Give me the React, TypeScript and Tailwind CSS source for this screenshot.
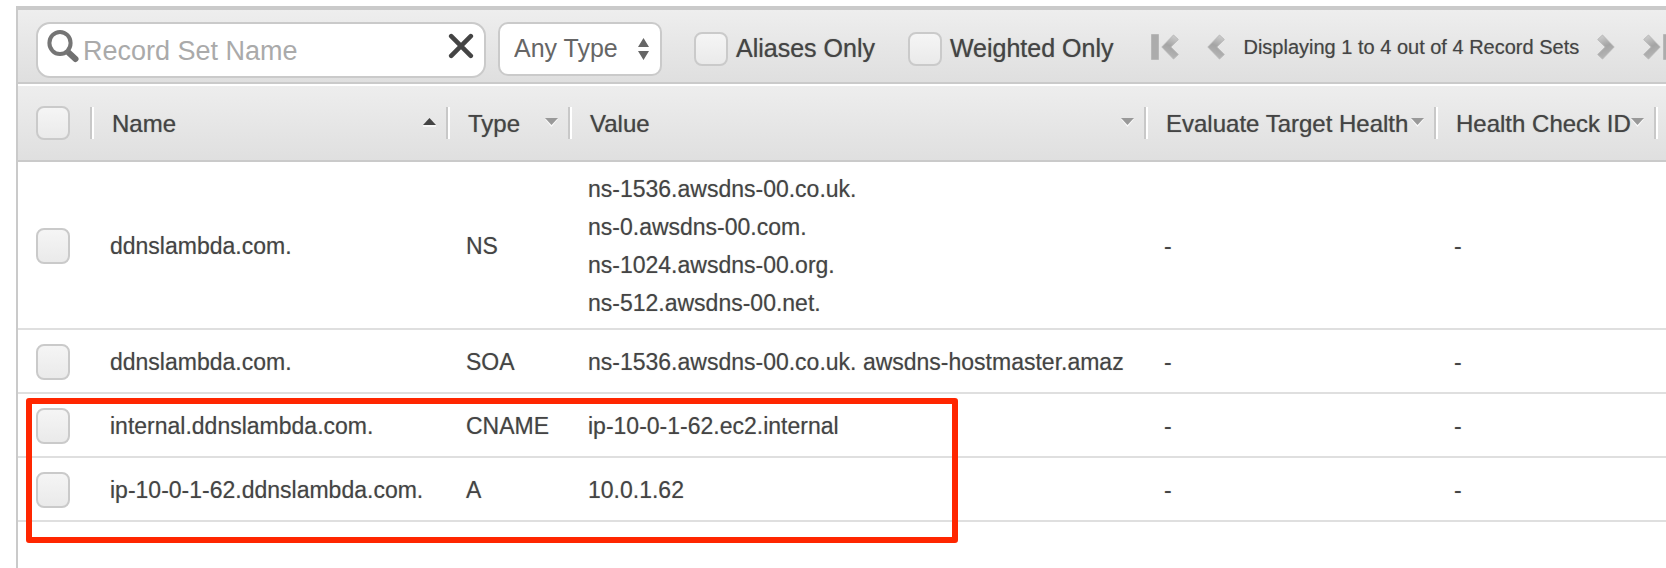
import React from "react";

type RecordSet = {
  name: string;
  type: string;
  values: string[];
};

const records: RecordSet[] = [
  {
    name: "ddnslambda.com.",
    type: "NS",
    values: [
      "ns-1536.awsdns-00.co.uk.",
      "ns-0.awsdns-00.com.",
      "ns-1024.awsdns-00.org.",
      "ns-512.awsdns-00.net.",
    ],
  },
  {
    name: "ddnslambda.com.",
    type: "SOA",
    values: ["ns-1536.awsdns-00.co.uk. awsdns-hostmaster.amaz"],
  },
  { name: "internal.ddnslambda.com.", type: "CNAME", values: ["ip-10-0-1-62.ec2.internal"] },
  { name: "ip-10-0-1-62.ddnslambda.com.", type: "A", values: ["10.0.1.62"] },
];

const checkboxBase =
  "block w-[34px] shrink-0 appearance-none rounded-lg border-2 border-[#cacaca] bg-linear-to-b from-[#f5f5f5] to-[#eaeaea] checked:bg-[#bbb] checked:bg-none";

function SearchIcon() {
  return (
    <svg className="h-[34px] w-[34px] shrink-0" viewBox="0 0 34 34" fill="none" aria-hidden="true">
      <path d="M22.5 23.5 29.5 30" stroke="#707070" strokeWidth="6" strokeLinecap="round" />
      <ellipse cx="14" cy="14" rx="10.6" ry="11" stroke="#757575" strokeWidth="4" />
    </svg>
  );
}

function ClearIcon() {
  return (
    <svg className="h-[26px] w-[26px]" viewBox="0 0 26 26" fill="none" aria-hidden="true">
      <path d="M3.2 3.2 22.8 22.8M22.8 3.2 3.2 22.8" stroke="#444" strokeWidth="4.6" strokeLinecap="round" />
    </svg>
  );
}

function Chevron({ flip = false }: { flip?: boolean }) {
  const id = flip ? "chevron-right" : "chevron-left";
  return (
    <svg
      className={flip ? "h-[26px] w-[18px] -scale-x-100" : "h-[26px] w-[18px]"}
      viewBox="0 0 18 26"
      aria-hidden="true"
    >
      <defs>
        <linearGradient id={id} x1="0.8" y1="0" x2="0.5" y2="1">
          <stop offset="0" stopColor="#d0d0d0" />
          <stop offset="0.5" stopColor="#a4a4a4" />
          <stop offset="1" stopColor="#b8b8b8" />
        </linearGradient>
      </defs>
      <path d="M12.5 1 17.3 5.5 9.8 13 17.3 20.5 12.5 25 .8 13Z" fill={`url(#${id})`} stroke="#b8b8b8" strokeWidth="1" />
    </svg>
  );
}

function Bar() {
  return (
    <svg className="h-[26px] w-2" viewBox="0 0 8 26" aria-hidden="true">
      <path d="M.5 .5H7.5V25.5H.5Z" fill="#acacac" stroke="#b8b8b8" />
    </svg>
  );
}

function SortIcon({ up = false }: { up?: boolean }) {
  return (
    <svg className="mb-1 h-[10px] w-[13px] shrink-0" viewBox="0 0 13 10" aria-hidden="true">
      {up ? (
        <>
          <path d="M0 8H13V10H0Z" fill="#f6f6f6" />
          <path d="M6.5 1 13 8H0Z" fill="#444" />
        </>
      ) : (
        <>
          <path d="M0 2H13L6.5 10Z" fill="#fafafa" />
          <path d="M0 1H13L6.5 8Z" fill="#999" />
        </>
      )}
    </svg>
  );
}

function HeaderCell({ label, sort }: { label: string; sort?: "up" | "down" }) {
  return (
    <th scope="col" className="h-[78px] border-y-2 border-t-white border-b-[#cacaca] p-0 font-normal">
      <div className="flex h-8 items-center border-l-2 border-[#c8c8c8] shadow-[inset_2px_0_0_#fff]">
        <button
          type="button"
          className="flex w-full items-center justify-between pt-[2px] pr-[10px] pl-5 whitespace-nowrap text-shadow-[0_0_1px_#4449]"
        >
          <span>{label}</span>
          {sort && <SortIcon up={sort === "up"} />}
        </button>
      </div>
    </th>
  );
}

function Toolbar() {
  return (
    <div className="flex h-[74px] items-start overflow-hidden border-b-2 border-[#cacaca] bg-linear-to-b from-[#eee] to-[#dfdfdf] pt-3 pl-[18px] text-[25px] whitespace-nowrap">
      <div className="flex h-14 w-[450px] shrink-0 items-center rounded-[14px] border-2 border-[#cacaca] bg-white pr-[10px] pl-2">
        <div className="-mt-2">
          <SearchIcon />
        </div>
        <input
          type="text"
          aria-label="Record Set Name"
          placeholder="Record Set Name"
          className="ml-[3px] min-w-0 flex-1 pt-[2px] text-[27px] outline-none placeholder:text-[#aaa]"
        />
        <button type="button" aria-label="Clear" className="-mt-2">
          <ClearIcon />
        </button>
      </div>

      <div className="relative ml-3 flex h-[54px] w-[164px] shrink-0 items-center rounded-[10px] border-2 border-[#cacaca] bg-white text-[#666]">
        <select aria-label="Record type" className="h-full w-full appearance-none bg-transparent pl-[14px] outline-none">
          <option>Any Type</option>
        </select>
        <svg className="pointer-events-none absolute right-[11px] h-[22px] w-[11px]" viewBox="0 0 11 22" aria-hidden="true">
          <path d="M5.5 0 11 9H0ZM5.5 22 0 13H11Z" fill="#666" />
        </svg>
      </div>

      <div className="ml-8 flex h-[54px] shrink-0 items-center gap-2">
        <input id="aliases" type="checkbox" className={`${checkboxBase} h-[34px]`} />
        <label htmlFor="aliases" className="text-shadow-[0_0_1px_#4449]">Aliases Only</label>
      </div>
      <div className="ml-[33px] flex h-[54px] shrink-0 items-center gap-2">
        <input id="weighted" type="checkbox" className={`${checkboxBase} h-[34px]`} />
        <label htmlFor="weighted" className="text-shadow-[0_0_1px_#4449]">Weighted Only</label>
      </div>

      <nav aria-label="Pages" className="ml-[38px] flex h-[50px] shrink-0 items-center">
        <button type="button" aria-label="First page" className="flex gap-[2px]">
          <Bar />
          <Chevron />
        </button>
        <button type="button" aria-label="Previous page" className="ml-7">
          <Chevron />
        </button>
        <span className="mx-[18px] text-[20px] text-shadow-[0_0_1px_#4446]">Displaying 1 to 4 out of 4 Record Sets</span>
        <button type="button" aria-label="Next page">
          <Chevron flip />
        </button>
        <button type="button" aria-label="Last page" className="ml-7 flex gap-[2px]">
          <Chevron flip />
          <Bar />
        </button>
      </nav>
    </div>
  );
}

export default function App() {
  const cell = "border-b-2 border-[#dfdfdf] pt-[2px] pb-0 pr-0 pl-5 whitespace-nowrap";
  return (
    <main className="min-h-screen overflow-hidden bg-white pt-1.5 pl-4 font-['Liberation_Sans',Arial,sans-serif] text-[#444]">
      <div className="min-h-[calc(100vh-6px)] border-t-4 border-l-2 border-[#cacaca]">
        <Toolbar />
        <div className="relative">
          <table className="w-full table-fixed border-separate border-spacing-0 text-left text-[24px]">
            <colgroup>
              <col className="w-[72px]" />
              <col className="w-[356px]" />
              <col className="w-[122px]" />
              <col />
              <col className="w-[290px]" />
              <col className="w-[220px]" />
              <col className="w-[12px]" />
            </colgroup>
            <thead>
              <tr className="bg-linear-to-b from-[#eee] to-[#dfdfdf]">
                <th className="border-y-2 border-t-white border-b-[#cacaca] p-0 pl-[18px]">
                  <input type="checkbox" aria-label="Select all" className={`${checkboxBase} h-[34px]`} />
                </th>
                <HeaderCell label="Name" sort="up" />
                <HeaderCell label="Type" sort="down" />
                <HeaderCell label="Value" sort="down" />
                <HeaderCell label="Evaluate Target Health" sort="down" />
                <HeaderCell label="Health Check ID" sort="down" />
                <th className="border-y-2 border-t-white border-b-[#cacaca] p-0">
                  <div className="h-8 border-l-2 border-[#c8c8c8] shadow-[inset_2px_0_0_#fff]" />
                </th>
              </tr>
            </thead>
            <tbody className="text-[23px] leading-[38px] text-shadow-[0_0_1px_#4446]">
              {records.map((r) => (
                <tr key={r.name + r.type} className="h-16">
                  <td className="border-b-2 border-[#dfdfdf] pt-[2px] pr-0 pb-0 pl-[18px]">
                    <input type="checkbox" aria-label={`Select ${r.name} ${r.type}`} className={`${checkboxBase} h-9`} />
                  </td>
                  <td className={cell}>{r.name}</td>
                  <td className={cell}>{r.type}</td>
                  <td className="border-b-2 border-[#dfdfdf] pt-2 pr-4 pb-1.5 pl-5">
                    {r.values.map((v) => (
                      <div key={v} className="overflow-hidden whitespace-nowrap">
                        {v}
                      </div>
                    ))}
                  </td>
                  <td className={cell}>-</td>
                  <td className={cell}>-</td>
                  <td className="border-b-2 border-[#dfdfdf] p-0" />
                </tr>
              ))}
            </tbody>
          </table>
          {/* Highlight around the two newly created records */}
          <div className="pointer-events-none absolute top-[314px] left-2 h-[145px] w-[932px] rounded-[3px] border-6 border-[#ff2600]" />
        </div>
      </div>
    </main>
  );
}
